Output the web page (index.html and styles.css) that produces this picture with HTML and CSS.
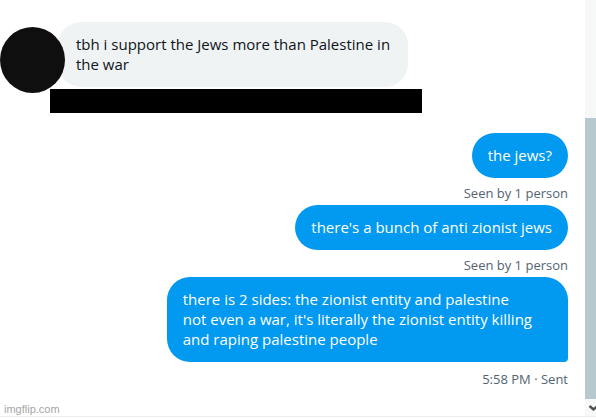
FILE: index.html
```html
<!DOCTYPE html>
<html lang="en">
<head>
    <meta charset="UTF-8">
    <meta name="viewport" content="width=device-width, initial-scale=1.0">
    <title>Messages</title>
    <link rel="stylesheet" href="styles.css">
</head>
<body>
    <div class="window">
        <main class="messages">
            <div class="incoming">
                <div class="avatar"></div>
                <p class="bubble received">tbh i support the Jews more than Palestine in the war</p>
            </div>
            <div class="redacted"></div>

            <div class="outgoing">
                <p class="bubble sent">the jews?</p>
                <span class="status">Seen by 1 person</span>
                <p class="bubble sent">there's a bunch of anti zionist jews</p>
                <span class="status">Seen by 1 person</span>
                <p class="bubble sent last">there is 2 sides: the zionist entity and palestine<br>not even a war, it's literally the zionist entity killing<br>and raping palestine people</p>
                <span class="status time">5:58 PM · Sent</span>
            </div>
        </main>

        <!-- Scrollbar -->
        <div class="scrollbar">
            <div class="thumb"></div>
            <svg class="arrow" viewBox="0 0 11 17">
                <path d="M4.5 7 L8.5 10.5 L12.5 7" fill="none" stroke="#505050" stroke-width="2.4"/>
            </svg>
        </div>
    </div>
    <span class="watermark">imgflip.com</span>
</body>
</html>
```

FILE: styles.css
```css
* {
    margin: 0;
    padding: 0;
    box-sizing: border-box;
}

body {
    position: relative;
    min-height: 100vh;
    padding-bottom: 1px;
    background-color: #fff;
    font-family: "Open Sans", "Noto Sans", sans-serif;
}

.window {
    display: flex;
    min-height: calc(100vh - 1px);
    border-bottom: 1px solid #eceeef;
}

/* Conversation */
.messages {
    flex: 1;
    padding: 22px 17px 0 0;
}

.bubble {
    padding: 12px 16px 13px;
    border-radius: 23px;
    font-size: 15px;
    line-height: 20px;
}

.incoming {
    display: flex;
    align-items: flex-start;
}

.avatar {
    z-index: 1;
    flex: none;
    width: 65px;
    height: 66px;
    margin-top: 5px;
    margin-bottom: -4px;
    border-radius: 50%;
    background-color: #0f0f0f;
}

.received {
    max-width: 350px;
    margin-left: -7px;
    padding-left: 18px;
    background-color: #eff3f4;
    color: #0f1419;
}

.redacted {
    width: 372px;
    max-width: 100%;
    height: 24px;
    margin-left: 50px;
    background-color: #000;
}

.outgoing {
    display: flex;
    flex-direction: column;
    align-items: flex-end;
    margin-top: 20px;
}

.sent {
    background-color: #0299f0;
    color: #fff;
}

.last {
    max-width: 402px;
    padding-right: 36px;
    border-bottom-right-radius: 4px;
}

.status {
    padding: 5px 0 2px;
    color: #536471;
    font-size: 13px;
    line-height: 20px;
}

.time {
    padding-top: 7px;
}

/* Scrollbar */
.scrollbar {
    display: flex;
    flex-direction: column;
    width: 11px;
    padding-top: 118px;
    background-color: #f7f9f9;
}

.thumb {
    flex: 1;
    background-color: #b5c9ce;
}

.arrow {
    display: block;
    width: 11px;
    height: 17px;
}

.watermark {
    position: absolute;
    bottom: 1px;
    left: 4px;
    color: #a5a5a5;
    font-family: "Liberation Sans", Arial, sans-serif;
    font-size: 11px;
    line-height: 16px;
}
```
